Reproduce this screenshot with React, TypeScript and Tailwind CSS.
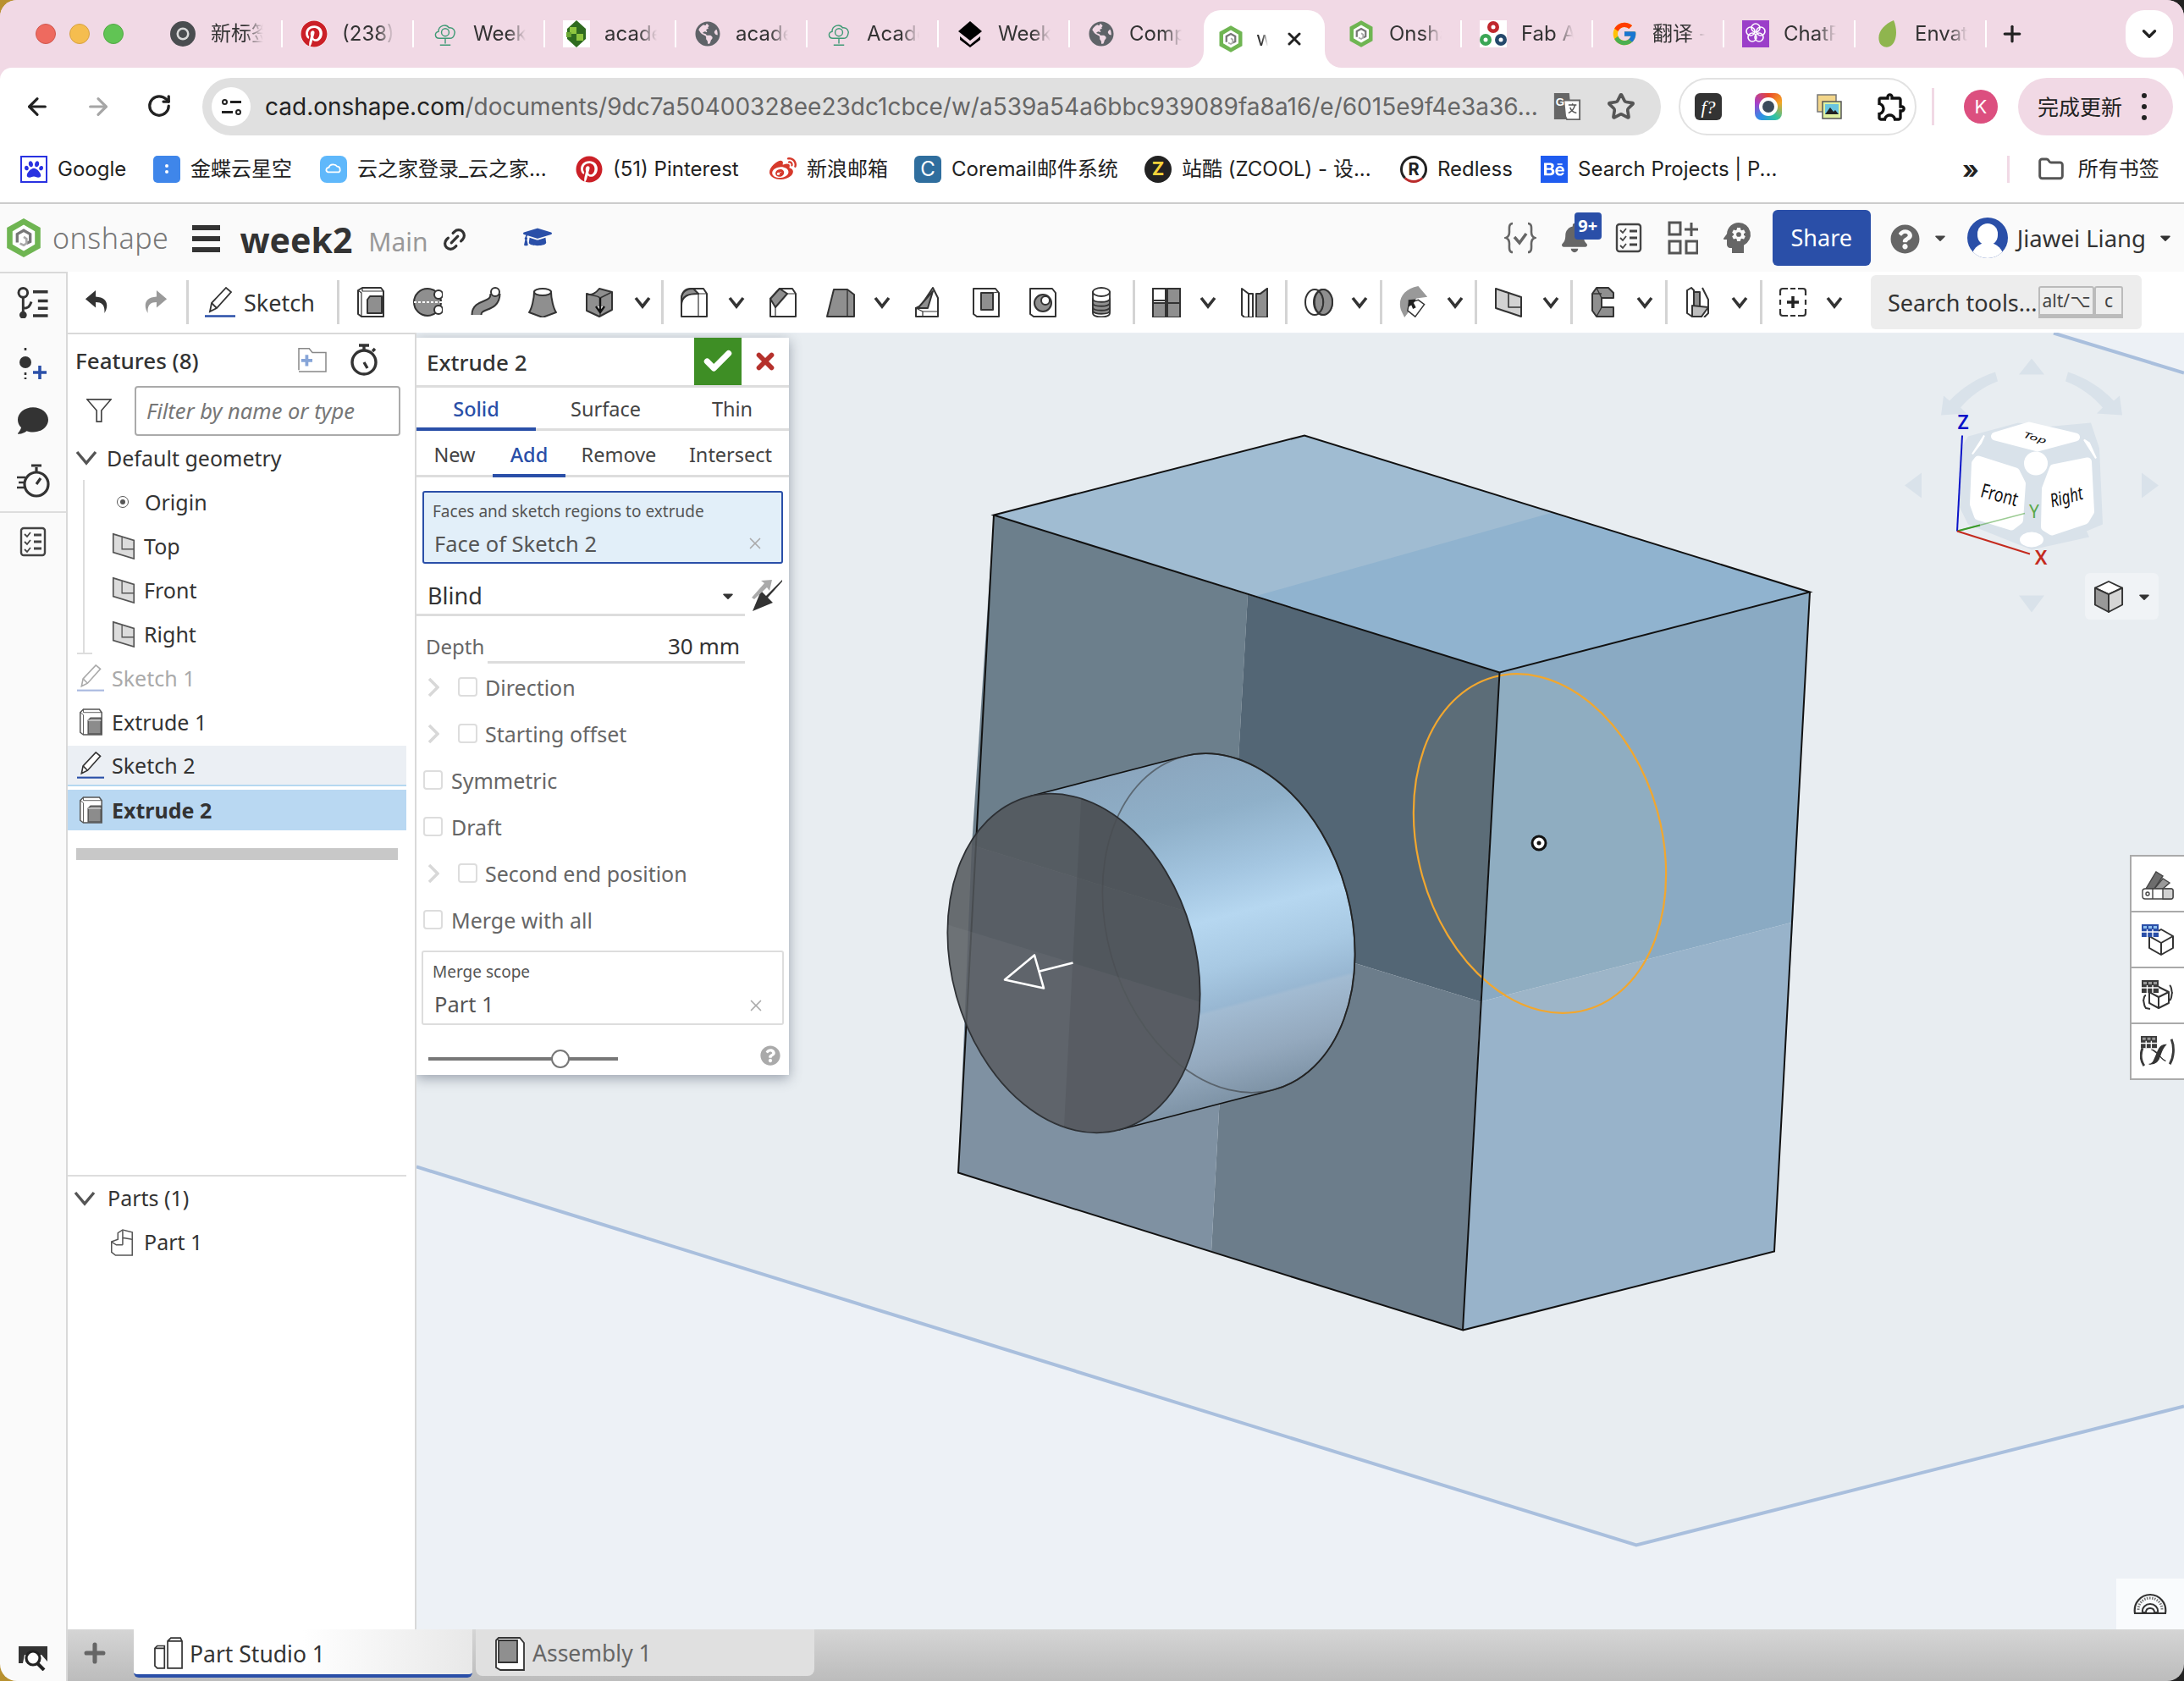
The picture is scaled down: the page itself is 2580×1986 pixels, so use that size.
import React from 'react';
import { ArrowLeft, ArrowRight, RotateCw, Star, Folder, ChevronDown, Plus, X, Link2, Check } from 'lucide-react';
import { FaPinterest, FaGlobeAmericas, FaPaw, FaWeibo, FaBehance, FaGraduationCap, FaBell, FaQuestionCircle, FaCaretDown, FaComment } from 'react-icons/fa';
import { FcGoogle } from 'react-icons/fc';
import { MdOutlineExtension, MdPsychology } from 'react-icons/md';

const BLUE = '#2a4fa8';

const Hex = ({ className = '' }: { className?: string }) => (
  <svg viewBox="0 0 40 44" className={className}>
    <path d="M20 1 38 11v22L20 43 2 33V11Z" fill="#6fb552" />
    <path d="M20 8 32 15v14l-12 7-12-7V15Z" fill="#fff" />
    <path d="M13 27V18l7-4 7 4v8l-4 2" fill="none" stroke="#777" strokeWidth="3" />
    <path d="M20 21l3 2v5l-3 2-4-2" fill="none" stroke="#aaa" strokeWidth="2.4" />
  </svg>
);

const Cloud = () => (
  <svg viewBox="0 0 32 36" className="w-[32px] h-[32px]" fill="none" stroke="#3f9a75" strokeWidth="1.6">
    <path d="M8 24C2 24 1 16 7 15 7 7 17 4 21 10c6-1 9 5 7 9-1 4-3 5-6 5Z" />
    <circle cx="16" cy="16" r="5" />
    <path d="M16 24v7M9 33h14" />
  </svg>
);

const Gem = () => (
  <svg viewBox="0 0 32 32" className="w-[32px] h-[32px]">
    <rect width="32" height="32" fill="#fff" />
    <path d="M16 0 27 10v12L16 32 5 22V10Z" fill="#2f6b1f" />
    <path d="M8 8h8v8H8ZM16 16h8v8h-8Z" fill="#8ec63f" />
    <path d="M4 14h6v6H4Z" fill="#6aa832" />
  </svg>
);

const Layers = () => (
  <svg viewBox="0 0 32 32" className="w-[32px] h-[32px]">
    <path d="M16 1 30 13 16 24 2 13Z" fill="#000" />
    <path d="M4 19 16 29 28 19 28 23 16 32 4 23Z" fill="#000" />
  </svg>
);

const ChromeLogo = () => (
  <svg viewBox="0 0 32 32" className="w-[32px] h-[32px]">
    <circle cx="16" cy="16" r="15" fill="#4a4d50" />
    <circle cx="16" cy="16" r="7.5" fill="#d9d9d9" />
    <circle cx="16" cy="16" r="5" fill="#4a4d50" />
  </svg>
);

const FabLogo = () => (
  <svg viewBox="0 0 32 32" className="w-[32px] h-[32px]">
    <rect width="32" height="32" fill="#fff" />
    <circle cx="16" cy="8" r="7" fill="#c0272d" />
    <circle cx="16" cy="8" r="2.5" fill="#fff" />
    <circle cx="7" cy="23" r="7" fill="#3aa655" />
    <circle cx="7" cy="23" r="2.5" fill="#fff" />
    <circle cx="25" cy="23" r="7" fill="#24486b" />
    <circle cx="25" cy="23" r="2.5" fill="#fff" />
  </svg>
);

const ChatLogo = () => (
  <svg viewBox="0 0 32 32" className="w-[32px] h-[32px]">
    <rect width="32" height="32" fill="#9b3fc9" />
    <g fill="none" stroke="#fff" strokeWidth="1.6">
      <circle cx="16" cy="9" r="5" />
      <circle cx="10" cy="13" r="5" />
      <circle cx="22" cy="13" r="5" />
      <circle cx="12" cy="20" r="5" />
      <circle cx="20" cy="20" r="5" />
    </g>
  </svg>
);

const EnvatoLeaf = () => (
  <svg viewBox="0 0 32 32" className="w-[32px] h-[32px]">
    <path d="M24 0C12 5 4 15 7 25c1 5 7 8 12 6C28 27 29 11 24 0Z" fill="#8fb54e" />
  </svg>
);

const PinIcon = ({ className = 'w-[32px] h-[32px]' }: { className?: string }) => (
  <span className={`${className} rounded-full bg-white flex items-center justify-center shrink-0`}>
    <FaPinterest className="w-full h-full text-[#cb2027]" />
  </span>
);

const Globe = () => <FaGlobeAmericas className="w-[30px] h-[30px] text-[#5f6368]" />;

const Tab = ({ icon, title }: { icon: React.ReactNode; title: string }) => (
  <div className="flex items-center w-[153px] h-full">
    <span className="ml-[21px] w-[32px] h-[32px] flex items-center justify-center shrink-0">{icon}</span>
    <span className="ml-[17px] w-[62px] overflow-hidden whitespace-nowrap text-[24px] text-[#333] [mask-image:linear-gradient(90deg,#000_65%,transparent)]">
      {title}
    </span>
  </div>
);

const Sep = () => <span className="w-[2px] h-[32px] bg-white shrink-0" />;

const TabStrip = () => (
  <div className="relative h-[80px] bg-[#f1d9e5] flex items-center pl-[179px]">
    <div className="absolute left-[42px] top-[28px] flex gap-[16px]">
      <span className="w-[24px] h-[24px] rounded-full bg-[#ee6a5f] border border-[#d0574d]" />
      <span className="w-[24px] h-[24px] rounded-full bg-[#f5bd4f] border border-[#d6a243]" />
      <span className="w-[24px] h-[24px] rounded-full bg-[#61c454] border border-[#52a945]" />
    </div>
    <Tab icon={<ChromeLogo />} title="新标签页" />
    <Sep />
    <Tab icon={<PinIcon />} title="(238) Pinterest" />
    <Sep />
    <Tab icon={<Cloud />} title="Week 1" />
    <Sep />
    <Tab icon={<Gem />} title="academy" />
    <Sep />
    <Tab icon={<Globe />} title="academy" />
    <Sep />
    <Tab icon={<Cloud />} title="Academy" />
    <Sep />
    <Tab icon={<Layers />} title="Week 2" />
    <Sep />
    <div className="w-[158px] h-full">
      <Tab icon={<Globe />} title="Computer" />
    </div>
    <div className="relative w-[143px] h-[68px] self-end bg-white rounded-t-[20px] flex items-center">
      <span className="absolute -left-[20px] bottom-0 w-[20px] h-[20px] bg-white" />
      <span className="absolute -left-[20px] bottom-0 w-[20px] h-[20px] bg-[#f1d9e5] rounded-br-[20px]" />
      <span className="absolute -right-[20px] bottom-0 w-[20px] h-[20px] bg-white" />
      <span className="absolute -right-[20px] bottom-0 w-[20px] h-[20px] bg-[#f1d9e5] rounded-bl-[20px]" />
      <Hex className="ml-[17px] w-[30px] h-[34px]" />
      <span className="ml-[15px] w-[14px] overflow-hidden text-[24px] text-[#333] [mask-image:linear-gradient(90deg,#000_50%,transparent)]">week2</span>
      <X className="ml-[19px] w-[24px] h-[24px] text-[#222]" strokeWidth={3} />
    </div>
    <div className="w-[160px] h-full flex items-center">
      <Hex className="ml-[28px] w-[30px] h-[34px]" />
      <span className="ml-[18px] w-[62px] overflow-hidden whitespace-nowrap text-[24px] text-[#333] [mask-image:linear-gradient(90deg,#000_65%,transparent)]">Onshape</span>
    </div>
    <Sep />
    <Tab icon={<FabLogo />} title="Fab Academy" />
    <Sep />
    <Tab icon={<FcGoogle className="w-[32px] h-[32px]" />} title="翻译 - Google" />
    <Sep />
    <Tab icon={<ChatLogo />} title="ChatPDF" />
    <Sep />
    <Tab icon={<EnvatoLeaf />} title="Envato" />
    <Sep />
    <Plus className="ml-[15px] w-[30px] h-[30px] text-[#222]" strokeWidth={2.6} />
    <span className="ml-[119px] w-[56px] h-[56px] bg-white rounded-[22px] flex items-center justify-center">
      <ChevronDown className="w-[26px] h-[26px] text-[#222]" strokeWidth={3} />
    </span>
  </div>
);

const TranslateIcon = () => (
  <svg viewBox="0 0 34 36" className="w-[34px] h-[34px]">
    <path d="M1 1h19l3 33H1Z" fill="#666" />
    <path d="M13 10h20v24H17l-2 -4Z" fill="#fff" stroke="#666" strokeWidth="2" />
    <text x="3" y="17" fontSize="14" fontWeight="700" fill="#fff" fontFamily="Liberation Sans, sans-serif">G</text>
    <path d="M19 16h10M24 14v2M27 16c-1 5-4 8-8 10M21 19c1 3 4 6 8 7" stroke="#555" strokeWidth="1.6" fill="none" />
  </svg>
);

const AddressRow = () => (
  <div className="h-[80px] bg-white rounded-t-[14px] flex items-start pt-[12px] pl-[28px]">
    <ArrowLeft className="mt-[18px] w-[32px] h-[32px] text-[#222]" strokeWidth={2.4} />
    <ArrowRight className="ml-[40px] mt-[18px] w-[32px] h-[32px] text-[#a6a6a6]" strokeWidth={2.4} />
    <RotateCw className="ml-[41px] mt-[18px] w-[30px] h-[30px] text-[#222]" strokeWidth={2.6} />
    <div className="ml-[36px] w-[1723px] h-[68px] bg-[#e0e0e0] rounded-full flex items-center">
      <span className="ml-[11px] w-[46px] h-[46px] rounded-full bg-white flex flex-col items-center justify-center gap-[5px] shrink-0">
        <span className="flex items-center gap-[3px]"><span className="w-[7px] h-[7px] rounded-full border-2 border-[#222]" /><span className="w-[13px] h-[3px] bg-[#222]" /></span>
        <span className="flex items-center gap-[3px]"><span className="w-[13px] h-[3px] bg-[#222]" /><span className="w-[7px] h-[7px] rounded-full border-2 border-[#222]" /></span>
      </span>
      <span className="ml-[17px] w-[1510px] whitespace-nowrap text-[28px] text-[#666]">
        <span className="text-[#222]">cad.onshape.com</span>/documents/9dc7a50400328ee23dc1cbce/w/a539a54a6bbc939089fa8a16/e/6015e9f4e3a36...
      </span>
      <span className="ml-[11px]"><TranslateIcon /></span>
      <Star className="ml-[30px] w-[34px] h-[34px] text-[#555]" strokeWidth={2.6} />
    </div>
    <div className="ml-[21px] w-[281px] h-[68px] rounded-full border-2 border-[#e2e2e2] flex items-center">
      <span className="ml-[17px] w-[32px] h-[32px] rounded-[6px] bg-[#333] text-white flex items-center justify-center italic text-[22px] font-['Liberation_Serif',serif]">f?</span>
      <span className="ml-[39px] w-[32px] h-[32px] rounded-[8px] bg-[conic-gradient(#e8452c,#f5a623,#2fc4a0,#2c8fe8,#a83fc9,#e8452c)] flex items-center justify-center">
        <span className="w-[22px] h-[22px] rounded-full bg-white flex items-center justify-center"><span className="w-[14px] h-[14px] rounded-full bg-[#3b4b5c]" /></span>
      </span>
      <svg viewBox="0 0 32 32" className="ml-[40px] w-[32px] h-[32px]">
        <rect x="2" y="2" width="22" height="20" fill="#f3d68a" stroke="#777" strokeWidth="1.5" />
        <rect x="8" y="10" width="22" height="20" fill="#dff0a0" stroke="#555" strokeWidth="1.5" />
        <rect x="11" y="13" width="16" height="12" fill="#69c5e0" />
        <path d="M11 25l6-8 4 5 2-2 4 5Z" fill="#222" />
      </svg>
      <MdOutlineExtension className="ml-[38px] w-[40px] h-[40px] text-[#111]" />
    </div>
    <span className="ml-[18px] mt-[12px] w-[3px] h-[44px] bg-[#f1d9e5]" />
    <span className="ml-[35px] mt-[14px] w-[40px] h-[40px] rounded-full bg-[#dc4f7f] text-white text-[22px] flex items-center justify-center">K</span>
    <div className="ml-[24px] w-[183px] h-[68px] rounded-full bg-[#f1d9e5] flex items-center pl-[23px]">
      <span className="text-[25px] text-[#222] font-['Noto_Sans_CJK_SC',sans-serif]">完成更新</span>
      <span className="ml-[23px] flex flex-col gap-[7px]">
        <span className="w-[6px] h-[6px] rounded-full bg-[#222]" />
        <span className="w-[6px] h-[6px] rounded-full bg-[#222]" />
        <span className="w-[6px] h-[6px] rounded-full bg-[#222]" />
      </span>
    </div>
  </div>
);

const SquareFav = ({ className, children }: { className: string; children: React.ReactNode }) => (
  <span className={`w-[32px] h-[32px] flex items-center justify-center shrink-0 ${className}`}>{children}</span>
);

const Bookmark = ({ icon, label, className }: { icon: React.ReactNode; label: string; className: string }) => (
  <div className={`flex items-center shrink-0 ${className}`}>
    {icon}
    <span className="ml-[12px] text-[24px] text-[#222] whitespace-nowrap">{label}</span>
  </div>
);

const BookmarkRow = () => (
  <div className="h-[81px] bg-white border-b-2 border-[#cccccc] flex items-center pl-[24px]">
    <Bookmark className="w-[157px]" label="Google" icon={<SquareFav className="border-2 border-[#2932e1] text-[#2932e1]"><FaPaw className="w-[22px] h-[22px]" /></SquareFav>} />
    <Bookmark className="w-[197px]" label="金蝶云星空" icon={<SquareFav className="rounded-[5px] bg-[#3f86ea] text-white"><span className="flex flex-col gap-[3px] items-center"><span className="w-[4px] h-[4px] rounded-full bg-white" /><span className="w-[4px] h-[4px] rounded-full bg-white" /></span></SquareFav>} />
    <Bookmark className="w-[302px]" label="云之家登录_云之家..." icon={<SquareFav className="rounded-[8px] bg-[#5fb8fb]"><svg viewBox="0 0 20 20" className="w-[22px] h-[22px]" fill="none" stroke="#fff" strokeWidth="1.6"><path d="M4 13c-3-1-2-5 1-5 1-4 7-4 9-1 3 0 4 4 2 6Z" /></svg></SquareFav>} />
    <Bookmark className="w-[229px]" label="(51) Pinterest" icon={<PinIcon />} />
    <Bookmark className="w-[171px]" label="新浪邮箱" icon={<FaWeibo className="w-[32px] h-[32px] text-[#d6392b]" />} />
    <Bookmark className="w-[272px]" label="Coremail邮件系统" icon={<SquareFav className="rounded-[6px] bg-[#2f6e9e] text-white text-[24px]">C</SquareFav>} />
    <Bookmark className="w-[302px]" label="站酷 (ZCOOL) - 设..." icon={<SquareFav className="rounded-full bg-[#222] text-[#f5d23a] font-bold text-[22px]">Z</SquareFav>} />
    <Bookmark className="w-[166px]" label="Redless" icon={<SquareFav className="rounded-full bg-white border-[3px] border-[#222] border-b-[#b92b2b] text-[#222] font-bold text-[20px]">R</SquareFav>} />
    <Bookmark className="w-[498px]" label="Search Projects | P..." icon={<SquareFav className="bg-[#1f5cf0] text-white"><FaBehance className="w-[24px] h-[24px]" /></SquareFav>} />
    <span className="text-[30px] leading-none text-[#222] font-bold">»</span>
    <span className="ml-[33px] w-[3px] h-[32px] bg-[#f1d9e5]" />
    <Folder className="ml-[33px] w-[32px] h-[32px] text-[#555]" strokeWidth={2.2} />
    <span className="ml-[16px] text-[24px] text-[#222]">所有书签</span>
  </div>
);

const Checklist = ({ className = '' }: { className?: string }) => (
  <svg viewBox="0 0 32 36" className={className} fill="none" stroke="#444" strokeWidth="2.4">
    <rect x="2" y="2" width="28" height="32" rx="3" />
    <path d="M6 9l3 3 4-5M6 18l3 3 4-5M6 27l3 3 4-5" strokeWidth="1.8" />
    <path d="M17 10h9M17 18h9M17 26h9" strokeWidth="3" />
  </svg>
);

const Header = () => (
  <div className="h-[80px] bg-[#fafafa] flex items-center shrink-0 relative">
    <Hex className="ml-[6px] w-[44px] h-[50px]" />
    <span className="ml-[12px] text-[34px] text-[#777] font-light tracking-[0.5px]">onshape</span>
    <span className="ml-[28px] w-[33px] flex flex-col gap-[7px] mt-[2px]">
      <span className="h-[6px] bg-[#333]" /><span className="h-[6px] bg-[#333]" /><span className="h-[6px] bg-[#333]" />
    </span>
    <span className="ml-[23px] mt-[4px] text-[41px] font-bold text-[#333] leading-none">week2</span>
    <span className="ml-[19px] mt-[10px] text-[30px] text-[#999] leading-none">Main</span>
    <Link2 className="ml-[15px] mt-[4px] w-[32px] h-[32px] text-[#333] -rotate-45" strokeWidth={2.4} />
    <FaGraduationCap className="ml-[65px] w-[34px] h-[30px] text-[#2a4fa8] -mt-[3px]" />
    <div className="ml-auto flex items-center relative">
      <svg viewBox="0 0 38 38" className="w-[38px] h-[38px]" fill="none" stroke="#666" strokeWidth="2.6">
        <path d="M10 2C5 2 6 8 6 12s-1 6-4 7c3 1 4 3 4 7s-1 10 4 10M28 2c5 0 4 6 4 10s1 6 4 7c-3 1-4 3-4 7s1 10-4 10" />
        <path d="M12 18l6 7 8-11" strokeWidth="3.5" />
      </svg>
      <span className="relative ml-[30px] w-[30px] h-[36px]">
        <FaBell className="w-[30px] h-[36px] text-[#666]" />
        <span className="absolute -top-[12px] left-[15px] w-[32px] h-[32px] rounded-[4px] bg-[#2a4fa8] text-white text-[20px] font-bold flex items-center justify-center">9+</span>
      </span>
      <Checklist className="ml-[33px] w-[32px] h-[36px]" />
      <svg viewBox="0 0 36 40" className="ml-[30px] w-[36px] h-[40px]" fill="none" stroke="#555" strokeWidth="3">
        <rect x="2" y="2" width="13" height="14" /><rect x="2" y="24" width="13" height="14" /><rect x="22" y="24" width="13" height="14" />
        <path d="M28 2v16M20 10h16" />
      </svg>
      <MdPsychology className="ml-[22px] w-[48px] h-[48px] text-[#666]" />
      <button className="ml-[18px] w-[116px] h-[66px] rounded-[6px] bg-[#2a4fa8] text-white text-[27px]">Share</button>
      <FaQuestionCircle className="ml-[23px] mt-[3px] w-[35px] h-[35px] text-[#666]" />
      <FaCaretDown className="ml-[14px] w-[20px] h-[20px] text-[#444]" />
      <span className="ml-[22px] w-[48px] h-[48px] rounded-full bg-[#2a4fa8] relative overflow-hidden flex justify-center">
        <span className="absolute top-[7px] w-[24px] h-[26px] rounded-full bg-white" />
        <span className="absolute top-[30px] w-[38px] h-[36px] rounded-full bg-white" />
      </span>
      <span className="ml-[11px] pt-[2px] text-[27.5px] text-[#333]">Jiawei Liang</span>
      <FaCaretDown className="ml-[13px] mr-[12px] w-[20px] h-[20px] text-[#333]" />
    </div>
  </div>
);

// toolbar icons
const I = ({ className = '', children, sw = 2 }: { className?: string; children: React.ReactNode; sw?: number }) => (
  <svg viewBox="0 0 36 36" className={`w-[36px] h-[36px] shrink-0 ${className}`} fill="none" stroke="#333" strokeWidth={sw} strokeLinejoin="round">
    {children}
  </svg>
);
const G = '#8f8f8f';
const Chev = ({ className = '' }: { className?: string }) => (
  <svg viewBox="0 0 20 20" className={`w-[20px] h-[20px] shrink-0 ${className}`} fill="none" stroke="#333" strokeWidth="3.6">
    <path d="M2 5l8 10 8-10" />
  </svg>
);
const TreeChev = ({ className = '' }: { className?: string }) => (
  <svg viewBox="0 0 26 20" className={`w-[26px] h-[20px] shrink-0 ${className}`} fill="none" stroke="#555" strokeWidth="3.4">
    <path d="M2 3l11 13L24 3" />
  </svg>
);
const VSep = ({ className = '' }: { className?: string }) => <span className={`w-[3px] h-[52px] bg-[#d4d4d4] shrink-0 ${className}`} />;

const ExtrudeIcon = ({ className = '' }: { className?: string }) => (
  <I className={className}>
    <path d="M3 4l5-3h22l3 4v30H7l-4-3Z" fill="#fff" />
    <path d="M8 1v4h25M3 4l4 3v28" strokeWidth="1.2" />
    <path d="M14 15l3-4h14v20H14Z" fill={G} />
  </I>
);
const PencilIcon = ({ className = '', dim = false }: { className?: string; dim?: boolean }) => (
  <svg viewBox="0 0 36 36" className={`shrink-0 ${className}`} fill="#fff" stroke={dim ? '#aaa' : '#333'} strokeWidth="1.8">
    <path d="M6 29 8 19 25 1l6 5L14 25Z" />
    <path d="M8 19l6 6" />
    <path d="M0 34.5h36" stroke={dim ? '#a9b9e0' : BLUE} strokeWidth="2.4" />
  </svg>
);

const Toolbar = () => (
  <div className="h-[72px] bg-white flex items-center shrink-0">
    <svg viewBox="0 0 30 32" className="ml-[20px] w-[28px] h-[32px] shrink-0" fill="#333"><path d="M14 1 1 12l13 11v-7c8 0 12 4 11 14 6-10 4-20-11-21Z" /></svg>
    <svg viewBox="0 0 30 32" className="ml-[42px] w-[28px] h-[32px] shrink-0" fill="#9a9a9a"><path d="M16 1 29 12 16 23v-7C8 16 4 20 5 30-1 20 1 10 16 9Z" /></svg>
    <VSep className="ml-[22px]" />
    <PencilIcon className="ml-[19px] w-[36px] h-[36px]" />
    <span className="ml-[10px] pt-[2px] w-[84px] text-[27px] text-[#333] whitespace-nowrap">Sketch</span>
    <VSep className="ml-[26px]" />
    <ExtrudeIcon className="ml-[19px]" />
    <I className="ml-[31px]">
      <circle cx="18" cy="18" r="16" fill={G} />
      <circle cx="31" cy="9" r="5" fill="#fff" /><circle cx="31" cy="27" r="5" fill="#fff" />
      <path d="M2 18h34" strokeDasharray="3 2" stroke="#fff" />
    </I>
    <I className="ml-[33px]">
      <path d="M7 33C7 18 29 26 29 8" stroke="#333" strokeWidth="13" />
      <path d="M7 33C7 18 29 26 29 8" stroke={G} strokeWidth="9" />
      <circle cx="29" cy="6" r="5" fill="#fff" />
    </I>
    <I className="ml-[31px]">
      <path d="M8 6C8 2 28 2 28 6c0 8 3 20 6 24l-16 6-16-6c3-4 6-16 6-24Z" fill={G} />
      <ellipse cx="18" cy="6" rx="10" ry="4" fill="#fff" />
    </I>
    <I className="ml-[31px]">
      <path d="M3 8c6 3 12-2 15-6l15 4v21l-15 8-15-7Z" fill={G} />
      <path d="M3 8c5 3 11 1 16 5l14-7M19 13v22" strokeWidth="1.4" />
      <path d="M19 13v16M14 23l5 7 5-7" stroke="#111" fill="#fff" strokeWidth="2.4" />
    </I>
    <Chev className="ml-[23px]" />
    <VSep className="ml-[12px]" />
    <I className="ml-[18px]">
      <path d="M3 35V14C3 6 8 2 14 2h15l4 6v27Z" fill="#fff" />
      <path d="M3 22C3 10 12 8 23 8l-6-6C8 2 3 7 3 14Z" fill={G} />
      <path d="M23 8h10M23 8v27" strokeWidth="1.2" />
    </I>
    <Chev className="ml-[22px]" />
    <I className="ml-[27px]">
      <path d="M3 35V14L14 2h15l4 6v27Z" fill="#fff" />
      <path d="M3 14 14 2l9 6L9 24Z" fill={G} />
      <path d="M9 24v11M23 8h10" strokeWidth="1.2" />
    </I>
    <I className="ml-[32px]">
      <path d="M10 3h16l8 6v26H2Z" fill={G} />
      <path d="M26 3v32" strokeWidth="1.4" />
    </I>
    <Chev className="ml-[21px]" />
    <I className="ml-[26px]">
      <path d="M4 35V25h4L24 1l6 12v22Z" fill="#fff" />
      <path d="M4 25h14L24 5 8 23Z" fill={G} />
      <path d="M4 25l8 4h18M12 29v6" strokeWidth="1.2" />
    </I>
    <I className="ml-[33px]">
      <path d="M3 2h26l4 5v28H7l-4-3Z" fill="#fff" />
      <path d="M12 7h14v20H12Z" fill={G} />
      <path d="M26 7l6-1" strokeWidth="1.2" />
    </I>
    <I className="ml-[31px]">
      <path d="M3 2h26l4 5v28H7l-4-3Z" fill="#fff" />
      <circle cx="18" cy="19" r="10" fill={G} />
      <circle cx="21" cy="16" r="5" fill="#fff" />
    </I>
    <I className="ml-[33px]" sw={1.8}>
      <path d="M8 6v25c0 6 20 6 20 0V6Z" fill="#fff" />
      <path d="M8 14c0 5 20 5 20 0v14c0 5-20 5-20 0Z" fill={G} />
      <path d="M8 19c0 5 20 5 20 0M8 24c0 5 20 5 20 0" />
      <ellipse cx="18" cy="6" rx="10" ry="5" fill="#fff" />
    </I>
    <VSep className="ml-[19px]" />
    <I className="ml-[19px]">
      <path d="M2 2h15v17H2ZM19 2h15v17H19Z" fill="#fff" />
      <path d="M2 8h15M19 8h15" />
      <path d="M2 19h15v17H2ZM19 2h15v34H19Z" fill={G} />
      <path d="M19 19h15" />
      <path d="M2 2h15v14H2Z" fill="#fff" />
    </I>
    <Chev className="ml-[21px]" />
    <I className="ml-[27px]">
      <path d="M3 2l8 6v28H6L3 33Z" fill="#fff" />
      <path d="M11 8h5v28h-5ZM33 2l-8 6v28h8Z" fill="#fff" />
      <path d="M25 8h-5v28h13V2Z" fill={G} />
    </I>
    <VSep className="ml-[18px]" />
    <I className="ml-[19px]">
      <ellipse cx="13" cy="18" rx="11" ry="15" fill="#fff" />
      <ellipse cx="23" cy="18" rx="11" ry="15" fill="#fff" />
      <path d="M18 5c7 6 7 20 0 26-7-6-7-20 0-26Z" fill={G} />
      <path d="M23 3c6 0 11 7 11 15s-5 15-11 15c-2 0-4-1-5-2 7-6 7-20 0-26 1-1 3-2 5-2Z" fill={G} />
    </I>
    <Chev className="ml-[20px]" />
    <VSep className="ml-[14px]" />
    <svg viewBox="0 0 40 42" className="ml-[19px] w-[36px] h-[42px] shrink-0">
      <path d="M4 33C-2 18 6 4 26 0l12 14-14 2-6 4-4 13-6 8Z" fill="#999" />
      <path d="M14 22l12-4 8 6-12 16-10-8Z" fill="#fff" stroke="#333" strokeWidth="1.6" />
      <path d="M13 18l10-1-3 5 3 6-4 2-2-5-4 2Z" fill="#222" />
    </svg>
    <Chev className="ml-[21px]" />
    <VSep className="ml-[13px]" />
    <I className="ml-[19px]">
      <path d="M3 2l30 10v23L3 25Z" fill="#d2d2d2" />
      <path d="M18 7v17h15" strokeWidth="1.6" />
    </I>
    <Chev className="ml-[22px]" />
    <VSep className="ml-[13px]" />
    <I className="ml-[17px]">
      <path d="M6 8l5-7h14l6 6v6H17v11h14v11H11l-5-7Z" fill={G} />
      <path d="M11 1l6 12M6 8h11M11 35l6-11" strokeWidth="1.4" />
    </I>
    <Chev className="ml-[22px]" />
    <VSep className="ml-[14px]" />
    <I className="ml-[17px]">
      <path d="M6 4l5-3 3 3v20l12 2 1 1-4 8H12l-6-4Z" fill="#fff" />
      <path d="M24 1l7 14v16l-5 5" fill="#fff" />
      <path d="M14 6h7v18h-7Z" fill={G} />
      <path d="M12 22l19 2-8 11H12Z" fill="#bdbdbd" />
    </I>
    <Chev className="ml-[22px]" />
    <VSep className="ml-[14px]" />
    <I className="ml-[18px]" sw={2.2}>
      <path d="M12 2h-6a3 3 0 0 0-3 3v5M24 2h6a3 3 0 0 1 3 3v5M12 34h-6a3 3 0 0 1-3-3v-5M24 34h6a3 3 0 0 0 3-3v-5M3 15v6M33 15v6M15 2h6M15 34h6" />
      <path d="M18 11v14M11 18h14" strokeWidth="3.5" stroke="#222" />
    </I>
    <Chev className="ml-[21px]" />
    <div className="ml-[33px] w-[320px] h-[64px] rounded-[6px] bg-[#ededed] flex items-center pl-[20px]">
      <span className="pt-[2px] text-[27px] text-[#333] whitespace-nowrap w-[178px]">Search tools...</span>
      <span className="h-[38px] w-[66px] rounded-t-[3px] border-2 border-[#bbb] border-b-[5px] text-[21px] text-[#444] flex items-center justify-center font-['Noto_Sans','DejaVu_Sans',sans-serif]">alt/⌥</span>
      <span className="h-[38px] w-[34px] rounded-t-[3px] border-2 border-[#bbb] border-b-[5px] text-[21px] text-[#444] flex items-center justify-center">c</span>
    </div>
  </div>
);

const PlaneIcon = () => (
  <svg viewBox="0 0 30 34" className="w-[30px] h-[32px] shrink-0" fill="#dcdcdc" stroke="#555" strokeWidth="1.8">
    <path d="M2 2l26 8v23L2 25Z" />
    <path d="M13 6v15h15" fill="none" strokeWidth="1.4" />
  </svg>
);

const FeatureIcon = () => (
  <svg viewBox="0 0 30 34" className="w-[30px] h-[32px] shrink-0" fill="none" stroke="#555" strokeWidth="1.6">
    <path d="M2 5l4-4h20l3 4v28H6l-4-3Z" fill="#fff" />
    <path d="M6 1v4h23M2 5l4 3v25" strokeWidth="1" />
    <path d="M12 15l3-3h13v20H12Z" fill="#8c8c8c" />
    <path d="M12 15h16" stroke="#ccc" />
  </svg>
);

const Row = ({ icon, label, className = '', textClass = 'text-[#333]' }: { icon?: React.ReactNode; label: string; className?: string; textClass?: string }) => (
  <div className={`h-[52px] flex items-center shrink-0 ${className}`}>
    {icon}
    <span className={`pt-[2px] text-[25px] whitespace-nowrap ${textClass}`}>{label}</span>
  </div>
);

const FeaturePanel = () => (
  <aside className="w-[412px] bg-white border-r-2 border-t-2 border-[#d9d9d9] flex flex-col shrink-0">
    <div className="h-[60px] flex items-center shrink-0 pl-[9px]">
      <span className="pt-[2px] text-[26px] font-medium text-[#333]">Features (8)</span>
      <svg viewBox="0 0 38 34" className="ml-[116px] w-[36px] h-[32px]" fill="none" stroke="#888" strokeWidth="1.6">
        <path d="M2 30V3h13l4 5h17v24H2" />
        <path d="M12 11v14M5 18h14" stroke="#87a5d8" strokeWidth="4" />
      </svg>
      <svg viewBox="0 0 34 38" className="ml-[26px] w-[34px] h-[38px]" fill="none" stroke="#333" strokeWidth="3.4">
        <circle cx="17" cy="22" r="14" />
        <path d="M17 8V3M11 2h12M27 9l3-3M17 22l4 7" />
      </svg>
    </div>
    <div className="h-[60px] flex items-center shrink-0 pl-[22px]">
      <svg viewBox="0 0 32 30" className="w-[30px] h-[28px]" fill="none" stroke="#444" strokeWidth="1.8"><path d="M1 1h30L19 15v14h-6V15Z" /></svg>
      <div className="ml-[27px] w-[314px] h-[59px] rounded-[4px] border-2 border-[#aaa] flex items-center pl-[12px] text-[25.5px] italic text-[#777]">Filter by name or type</div>
    </div>
    <div className="h-[52px] flex items-center shrink-0 pl-[9px]">
      <TreeChev />
      <span className="ml-[11px] pt-[2px] text-[25px] text-[#333]">Default geometry</span>
    </div>
    <div className="relative">
      <span className="absolute left-[18px] top-0 h-[205px] w-[2px] bg-[#ddd]" />
      <span className="absolute left-[11px] top-[204px] w-[18px] h-[2px] bg-[#ddd]" />
      <Row className="pl-[58px]" label="Origin" icon={<span className="mr-[19px] w-[14px] h-[14px] rounded-full border-[1.5px] border-[#555] flex items-center justify-center"><span className="w-[6px] h-[6px] rounded-full bg-[#555]" /></span>} />
      <Row className="pl-[51px]" label="Top" icon={<span className="mr-[9px]"><PlaneIcon /></span>} />
      <Row className="pl-[51px]" label="Front" icon={<span className="mr-[9px]"><PlaneIcon /></span>} />
      <Row className="pl-[51px]" label="Right" icon={<span className="mr-[9px]"><PlaneIcon /></span>} />
    </div>
    <Row className="pl-[11px]" label="Sketch 1" textClass="text-[#aaa]" icon={<PencilIcon dim className="w-[32px] h-[32px] mr-[9px]" />} />
    <Row className="pl-[12px]" label="Extrude 1" icon={<span className="mr-[10px]"><FeatureIcon /></span>} />
    <div className="h-[52px] pt-[2px] shrink-0">
      <Row className="!h-[48px] w-[400px] pl-[11px] bg-[#ebeff4] border-b-2 border-[#b5d8f0]" label="Sketch 2" icon={<PencilIcon className="w-[32px] h-[32px] mr-[9px]" />} />
    </div>
    <div className="h-[52px] pt-[2px] shrink-0">
      <Row className="!h-[48px] w-[400px] pl-[12px] bg-[#b9d8f2]" label="Extrude 2" textClass="text-[#333] font-bold" icon={<span className="mr-[10px]"><FeatureIcon /></span>} />
    </div>
    <div className="ml-[10px] mt-[19px] w-[380px] h-[14px] bg-[#c8c8c8] shrink-0" />
    <div className="mt-auto h-[537px] shrink-0">
      <div className="w-[400px] h-[2px] bg-[#dddddd]" />
      <div className="h-[52px] flex items-center pl-[7px]">
        <TreeChev />
        <span className="ml-[14px] text-[25px] text-[#333]">Parts (1)</span>
      </div>
      <div className="h-[52px] flex items-center pl-[49px]">
        <svg viewBox="0 0 30 34" className="w-[30px] h-[32px]" fill="#fff" stroke="#555" strokeWidth="1.6">
          <path d="M2 16l8-3V5l6-4 12 3v29H7l-5-4Z" /><path d="M16 1v10l12 2M2 16l6 4h8M16 20v-9" />
        </svg>
        <span className="ml-[11px] text-[25px] text-[#333]">Part 1</span>
      </div>
    </div>
  </aside>
);

const CheckBox = () => <span className="block w-[23px] h-[23px] rounded-[4px] border-2 border-[#ddd] shrink-0" />;

const Option = ({ label, nested = false }: { label: string; nested?: boolean }) => (
  <div className="h-[55px] flex items-center shrink-0 text-[25px] text-[#666] whitespace-nowrap">
    {nested ? (
      <>
        <svg viewBox="0 0 14 24" className="ml-[13px] w-[14px] h-[24px] shrink-0" fill="none" stroke="#d8d8d8" strokeWidth="3.6"><path d="M2 2l10 10L2 22" /></svg>
        <span className="ml-[22px]"><CheckBox /></span>
        <span className="ml-[9px] pt-[2px]">{label}</span>
      </>
    ) : (
      <>
        <span className="ml-[8px]"><CheckBox /></span>
        <span className="ml-[10px] pt-[2px]">{label}</span>
      </>
    )}
  </div>
);

const Dialog = () => (
  <div className="absolute left-0 top-[6px] w-[440px] h-[871px] bg-white shadow-[0_4px_14px_rgba(60,70,90,0.45)] flex flex-col">
    <div className="h-[56px] flex items-center shrink-0 pl-[12px]">
      <span className="text-[26px] font-medium text-[#333] pt-[2px]">Extrude 2</span>
      <span className="ml-auto w-[56px] h-[56px] bg-[#3e8e25] flex items-center justify-center">
        <Check className="w-[38px] h-[38px] text-white" strokeWidth={4.5} />
      </span>
      <X className="ml-[13px] mr-[13px] w-[30px] h-[30px] text-[#b5312c]" strokeWidth={4.5} />
    </div>
    <div className="h-[54px] pt-[3px] border-t-[3px] border-b-[3px] border-[#ddd] flex text-[23.5px] text-[#444] shrink-0">
      <span className="relative w-[141px] flex items-center justify-center font-medium text-[#2a4fa8]">
        Solid
        <span className="absolute left-0 right-0 -bottom-[3px] h-[4px] bg-[#2a4fa8]" />
      </span>
      <span className="w-[165px] flex items-center justify-center">Surface</span>
      <span className="w-[134px] flex items-center justify-center">Thin</span>
    </div>
    <div className="h-[55px] pt-[6px] border-b-[3px] border-[#ddd] flex text-[23.5px] text-[#444] shrink-0">
      <span className="w-[90px] flex items-center justify-center">New</span>
      <span className="relative w-[86px] flex items-center justify-center font-medium text-[#2a4fa8]">
        Add
        <span className="absolute left-0 right-0 -bottom-[3px] h-[4px] bg-[#2a4fa8]" />
      </span>
      <span className="w-[126px] flex items-center justify-center">Remove</span>
      <span className="w-[138px] flex items-center justify-center">Intersect</span>
    </div>
    <div className="mx-[7px] mt-[16px] h-[86px] rounded-[3px] border-2 border-[#2a4fa8] bg-[#e2eff9] shrink-0 pl-[10px] relative">
      <div className="mt-[8px] text-[19px] text-[#555] leading-[28px]">Faces and sketch regions to extrude</div>
      <div className="mt-[7px] ml-[2px] text-[25.5px] text-[#555] leading-[34px]">Face of Sketch 2</div>
      <X className="absolute right-[20px] top-[49px] w-[22px] h-[22px] text-[#aaa]" strokeWidth={1.8} />
    </div>
    <div className="flex shrink-0 mt-[14px]">
      <div className="w-[388px] h-[48px] pt-[3px] border-b-[3px] border-[#ddd] flex items-center pl-[13px]">
        <span className="text-[27px] text-[#333]">Blind</span>
        <FaCaretDown className="ml-auto mr-[10px] w-[20px] h-[20px] text-[#333]" />
      </div>
      <svg viewBox="0 0 38 38" className="ml-[7px] mt-[4px] w-[38px] h-[38px]">
        <path d="M37 1 18 20l-6-6-10 24 24-10-6-6L37 3Z" fill="#333" />
        <path d="M1 22 16 5l-4-3 13-1-3 13-3-4L4 24Z" fill="#aaa" />
      </svg>
    </div>
    <div className="flex shrink-0 h-[56px] items-end">
      <span className="ml-[11px] w-[73px] mb-[2px] text-[24px] text-[#666]">Depth</span>
      <div className="w-[304px] h-[48px] pt-[9px] border-b-[3px] border-[#ddd] flex items-center justify-end pr-[6px] text-[26px] text-[#333]">30 mm</div>
    </div>
    <Option nested label="Direction" />
    <Option nested label="Starting offset" />
    <Option label="Symmetric" />
    <Option label="Draft" />
    <Option nested label="Second end position" />
    <Option label="Merge with all" />
    <div className="mx-[6px] mt-[9px] h-[88px] rounded-[3px] border-2 border-[#ddd] shrink-0 pl-[11px] relative">
      <div className="mt-[9px] text-[19px] text-[#555] leading-[28px]">Merge scope</div>
      <div className="mt-[7px] ml-[2px] text-[25.5px] text-[#555] leading-[34px]">Part 1</div>
      <X className="absolute right-[20px] top-[52px] w-[22px] h-[22px] text-[#aaa]" strokeWidth={1.8} />
    </div>
    <div className="flex items-center mt-[38px] pl-[14px] relative">
      <div className="relative w-[224px] h-[4px] bg-[#777]">
        <span className="absolute left-[145px] -top-[9px] w-[22px] h-[22px] rounded-full bg-white border-2 border-[#777]" />
      </div>
      <FaQuestionCircle className="absolute right-[10px] -top-[14px] w-[24px] h-[24px] text-[#aaa]" />
    </div>
  </div>
);

const Ell = (cx: number, cy: number) => ({ cx, cy, rx: 204, ry: 144, transform: `rotate(74.4 ${cx} ${cy})` });

const Model = () => (
  <g>
    <defs>
      <linearGradient id="cyl" gradientUnits="userSpaceOnUse" x1="1307" y1="918" x2="1413" y2="1312">
        <stop offset="0" stopColor="#8ba6be" />
        <stop offset="0.18" stopColor="#8fb0c9" />
        <stop offset="0.36" stopColor="#a4c6e1" />
        <stop offset="0.48" stopColor="#b6d7f0" />
        <stop offset="0.62" stopColor="#a8c9e3" />
        <stop offset="0.73" stopColor="#98b7d2" />
        <stop offset="0.74" stopColor="#a2bbd2" />
        <stop offset="0.88" stopColor="#94a9be" />
        <stop offset="1" stopColor="#7e93a6" />
      </linearGradient>
      <clipPath id="cap"><ellipse {...Ell(1268.5, 1138.5)} /></clipPath>
    </defs>
    <polygon points="1174,609 1541,515 2138,700 1771.5,795" fill="#a0bcd2" />
    <polygon points="1482,705 1834,606 2138,700 1771.5,795" fill="#90b3cf" />
    <polygon points="1174,609 1474,703 1452,1093 1148,999" fill="#6c7f8c" />
    <polygon points="1474,703 1771.5,795 1749,1184 1452,1093" fill="#536675" />
    <polygon points="1452,1093 1749,1184 1728,1572 1431,1479" fill="#6c7d8b" />
    <polygon points="1148,999 1452,1093 1431,1479 1132,1386" fill="#7f91a2" />
    <polygon points="1771.5,795 2138,700 2118,1090 1749,1184" fill="#8aaac3" />
    <polygon points="1749,1184 2118,1090 2096,1479 1728,1572" fill="#98b3ca" />
    <ellipse {...Ell(1819, 997)} fill="#e8d8a8" fillOpacity="0.06" stroke="#f2a72e" strokeWidth="2.2" />
    <circle cx="1818" cy="996.5" r="8" fill="#fff" stroke="#111" strokeWidth="3" />
    <circle cx="1818" cy="996.5" r="2.5" fill="#111" />
    <g fill="none" stroke="#111" strokeWidth="2">
      <path d="M1174 609 1541 515 2138 700 1771.5 795Z" />
      <path d="M1174 609 1132 1386 1728 1572 1771.5 795M1728 1572 2096 1479 2138 700" />
    </g>
    <path d="M1215.5 941.5 1398.5 894A204 144 74.4 0 1 1504.5 1288L1321.5 1335.5A204 144 74.4 0 0 1215.5 941.5Z" fill="url(#cyl)" />
    <path d="M1215.5 941.5 1398.5 894A204 144 74.4 0 1 1504.5 1288L1321.5 1335.5" fill="none" stroke="#111" strokeWidth="1.8" />
    <ellipse {...Ell(1451.5, 1091)} fill="none" stroke="#333" strokeOpacity="0.55" strokeWidth="1.8" />
    <ellipse {...Ell(1268.5, 1138.5)} fill="#52565b" fillOpacity="0.86" stroke="#2c2f33" strokeWidth="1.8" />
    <g clipPath="url(#cap)">
      <polygon points="1100,1087 1440,1191 1440,1360 1100,1360" fill="#fff" fillOpacity="0.045" />
      <polygon points="1278,930 1450,930 1450,1350 1256,1350" fill="#000" fillOpacity="0.07" />
    </g>
    <g fill="none" stroke="#fff" strokeWidth="2.6" strokeLinejoin="round">
      <path d="M1187 1158 1222 1129 1233 1168Z" />
      <path d="M1228 1148 1267.5 1138" />
    </g>
  </g>
);

const ViewCube = () => (
  <g>
    <g fill="#d9e2ea">
      <path d="M2400 424 2415 443H2385Z" />
      <path d="M2400 724 2415 704H2385Z" />
      <path d="M2250 574 2270 559V589Z" />
      <path d="M2550 574 2530 559V589Z" />
      <path d="M2293 491 2296 468 2303 474C2318 458 2336 447 2357 440L2360 451C2342 458 2328 468 2316 482L2323 489Z" />
      <path d="M2507 491 2504 468 2497 474C2482 458 2464 447 2443 440L2440 451C2458 458 2472 468 2484 482L2477 489Z" />
      <path d="M2325 516 2384 500 2415 505 2470 500 2480 530 2484 620 2465 628 2468 635 2400 650 2325 620 2315 600 2317 530Z" />
    </g>
    <g fill="#fff" stroke="#fff" strokeWidth="10" strokeLinejoin="round">
      <path d="M2357 516 2397 504 2452 517 2407 529Z" />
      <path d="M2337 544 2381 558 2388 572 2385 615 2376 622 2337 610 2332 596 2334 548Z" />
      <path d="M2466 546 2426 554 2417 578 2416 623 2424 628 2463 615 2469 605Z" />
    </g>
    <circle cx="2405" cy="548" r="14" fill="#fff" />
    <ellipse cx="2400" cy="638" rx="14" ry="9" fill="#fff" />
    <path d="M2344 515 2330 537 2340 524Z" fill="#fff" stroke="#fff" strokeWidth="2" />
    <path d="M2462 520 2476 542 2468 524Z" fill="#fff" stroke="#fff" strokeWidth="2" />
    <g fontFamily="Noto Sans, sans-serif" fill="#111" textAnchor="middle">
      <text x="0" y="0" fontSize="15" fontStyle="italic" transform="translate(2403 521) rotate(16) scale(1.2 0.65)">Top</text>
      <text x="0" y="0" fontSize="21" transform="translate(2360 593) rotate(15) scale(0.85 1.1)">Front</text>
      <text x="0" y="0" fontSize="20" fontStyle="italic" transform="translate(2443 595) rotate(-15) scale(0.85 1.1)">Right</text>
    </g>
    <path d="M2312 628 2392 607" stroke="#3a9a2a" strokeWidth="1.5" strokeOpacity="0.5" />
    <path d="M2312 628 2339 621" stroke="#3a9a2a" strokeWidth="2" />
    <path d="M2312 628 2318 515" stroke="#0b14c8" strokeWidth="2" />
    <path d="M2312 628 2398 655" stroke="#c42a1e" strokeWidth="2" />
    <g fontFamily="Noto Sans, sans-serif" fontWeight="600" fontSize="23" textAnchor="middle">
      <text x="2319" y="507" fill="#0b14c8">Z</text>
      <text x="2411" y="667" fill="#c42a1e">X</text>
      <text x="2403" y="612" fill="#5aa84a" fontWeight="400" fontSize="21">Y</text>
    </g>
  </g>
);

const Viewport = () => (
  <main className="relative flex-1 overflow-hidden bg-[#edf1f6]">
    <svg viewBox="492 394 2088 1531" className="absolute inset-0 w-full h-full">
      <polygon points="492,394 2426,394 2580,441 2580,1662 1933,1826 492,1379" fill="#e8edf1" />
      <path d="M2426 394 2580 441M492 1379 1933 1826 2580 1662" fill="none" stroke="#a9bfdd" strokeWidth="4" />
      <Model />
      <ViewCube />
    </svg>
    <Dialog />
    <div className="absolute left-[1971px] top-[284px] w-[87px] h-[55px] rounded-[6px] bg-[#f0f3f6] flex items-center pl-[10px]">
      <svg viewBox="0 0 38 40" className="w-[36px] h-[38px]" stroke="#333" strokeWidth="2" strokeLinejoin="round">
        <path d="M19 1 36 9 19 17 2 9Z" fill="#fff" />
        <path d="M2 9 19 17V39L2 30Z" fill="#999" />
        <path d="M36 9 19 17V39L36 30Z" fill="#d5d5d5" />
      </svg>
      <FaCaretDown className="ml-[14px] w-[20px] h-[20px] text-[#333]" />
    </div>
    <div className="absolute right-0 top-[617px] w-[64px] h-[266px] border-2 border-r-0 border-[#aaa] bg-white flex flex-col">
      <div className="h-[66px] flex items-center justify-center border-b-2 border-[#aaa]">
        <svg viewBox="0 0 40 40" className="w-[40px] h-[40px]" stroke="#444" strokeWidth="1.4">
          <path d="M6 26 18 6l8 5-10 15Z" fill="#6d6d6d" />
          <path d="M16 26 26 14l8 5-8 7Z" fill="#999" />
          <rect x="2" y="26" width="36" height="12" rx="3" fill="#fff" />
          <path d="M26 26h10a2 2 0 0 1 2 2v8a2 2 0 0 1-2 2H26Z" fill="#d2d2d2" />
          <path d="M14 26v12" />
          <circle cx="8" cy="32" r="2" fill="#fff" />
        </svg>
      </div>
      <div className="h-[66px] flex items-center justify-center border-b-2 border-[#aaa]">
        <svg viewBox="0 0 40 40" className="w-[40px] h-[40px]">
          <g fill="none" stroke="#333" strokeWidth="2" strokeLinejoin="round">
            <path d="M10 16 24 8 38 16V30L24 38 10 30Z" />
            <path d="M10 16 24 24 38 16M24 24V38" />
          </g>
          <rect x="1" y="2" width="20" height="15" fill="#2a4fa8" />
          <path d="M3 4h4v3H3ZM9 4h4v3H9ZM15 4h4v3h-4Z" fill="#8fc1ef" />
          <path d="M1 11h20M7.5 8v9M14 8v9" stroke="#fff" strokeWidth="1.4" />
        </svg>
      </div>
      <div className="h-[66px] flex items-center justify-center border-b-2 border-[#aaa]">
        <svg viewBox="0 0 40 40" className="w-[40px] h-[40px]">
          <g fill="none" stroke="#333" strokeWidth="2" strokeLinejoin="round">
            <path d="M10 16 21 10 33 16V29L21 35 10 29Z" />
            <path d="M10 16 21 22 33 16M21 22V35" />
            <path d="M6 20c-3 0-2 5-3 6 1 1 0 6 3 9l5 1M34 8c3 2 2 8 3 9-1 1 0 7-3 9" />
          </g>
          <rect x="1" y="2" width="20" height="15" fill="#3a3a3a" />
          <path d="M3 4h4v3H3ZM9 4h4v3H9ZM15 4h4v3h-4Z" fill="#999" />
          <path d="M1 11h20M7.5 8v9M14 8v9" stroke="#fff" strokeWidth="1.4" />
        </svg>
      </div>
      <div className="h-[64px] flex items-center justify-center">
        <svg viewBox="0 0 44 40" className="w-[42px] h-[38px]">
          <rect x="1" y="1" width="20" height="15" fill="#3a3a3a" />
          <path d="M3 3h4v3H3ZM9 3h4v3H9ZM15 3h4v3h-4Z" fill="#999" />
          <path d="M1 10h20M7.5 7v9M14 7v9" stroke="#fff" strokeWidth="1.4" />
          <path d="M3 16c-3 8-2 16 2 22M39 5c4 10 3 22-2 31" fill="none" stroke="#3a3a3a" strokeWidth="3" />
          <path d="M11 36c5 0 6-4 9-11 3-8 5-13 12-13-3 3-5 7-7 13-2 7-5 11-14 11Z M14 18c8 0 12 14 18 14" fill="#333" stroke="#333" strokeWidth="1.2" />
        </svg>
      </div>
    </div>
    <div className="absolute right-0 bottom-0 w-[80px] h-[60px] bg-[#f9fbfd] flex items-center justify-center">
      <svg viewBox="0 0 40 26" className="w-[40px] h-[26px]" fill="none" stroke="#333">
        <path d="M2 24C0 12 9 2 20 2s20 10 18 22Z" strokeWidth="2.2" />
        <path d="M6 20C6 12 12 6 20 6s14 6 14 14" strokeWidth="3" strokeDasharray="1.5 1.5" stroke="#777" />
        <path d="M11 23c-1-6 4-10 9-10s10 4 9 10h-4c0-3-2-5-5-5s-5 2-5 5Z" strokeWidth="2" />
      </svg>
    </div>
  </main>
);

const Rail = () => (
  <nav className="w-[80px] bg-[#fafafa] border-r-2 border-t-2 border-[#d9d9d9] flex flex-col items-center shrink-0 relative">
    <svg viewBox="0 0 40 38" className="mt-[16px] w-[40px] h-[37px]" fill="none" stroke="#333" strokeWidth="3">
      <circle cx="8" cy="7" r="5.5" />
      <path d="M8 13v20M8 26c6 0 8-2 10-8" />
      <circle cx="8" cy="34" r="3" fill="#333" />
      <path d="M20 6h18M26 17h12M26 26h12M20 35h18" strokeWidth="3.6" />
    </svg>
    <svg viewBox="0 0 34 40" className="mt-[34px] w-[34px] h-[40px]">
      <path d="M8 1v5M8 30v8" stroke="#333" strokeWidth="2.6" strokeDasharray="3 3" />
      <circle cx="8" cy="18" r="7" fill="#333" />
      <path d="M25 22v16M17 30h16" stroke={BLUE} strokeWidth="3.6" />
    </svg>
    <FaComment className="mt-[29px] w-[40px] h-[36px] text-[#333]" />
    <svg viewBox="0 0 40 42" className="mt-[32px] w-[40px] h-[42px]" fill="none" stroke="#333" strokeWidth="3.2">
      <circle cx="24" cy="25" r="14" />
      <path d="M24 11V5M18 3h12M24 25l5-7" />
      <path d="M1 17h10M3 23h7M1 29h9" strokeWidth="2.4" />
    </svg>
    <div className="mt-[15px] w-full h-[2px] bg-[#dddddd]" />
    <Checklist className="mt-[16px] w-[32px] h-[36px]" />
    <svg viewBox="0 0 36 30" className="mt-auto mb-[12px] w-[36px] h-[30px]">
      <path d="M1 1h34v18l-7-8H8l-2 10H1Z" fill="#333" />
      <circle cx="18" cy="15" r="8" fill="#fff" stroke="#222" strokeWidth="3.2" />
      <path d="M23 21l8 8" stroke="#222" strokeWidth="4" />
    </svg>
  </nav>
);

const BottomBar = () => (
  <div className="h-[61px] shrink-0 bg-gradient-to-b from-[#d5d5d5] to-[#bcbcbc] flex items-start">
    <Plus className="ml-[15px] mt-[11px] w-[34px] h-[34px] text-[#666]" strokeWidth={3.6} />
    <div className="ml-[29px] w-[400px] h-[57px] pt-[3px] rounded-b-[6px] bg-gradient-to-r from-white via-white to-[#e8e8e8] border-b-4 border-[#2a4fa8] flex items-center pl-[24px]">
      <svg viewBox="0 0 36 40" className="w-[34px] h-[38px]" fill="#fff" stroke="#333" strokeWidth="1.8">
        <path d="M1 14l3-3h9v28H4l-3-3Z" /><path d="M17 5l4-4h12l2 4v34H17Z" /><path d="M1 14h12M17 5h18" fill="none" />
      </svg>
      <span className="ml-[8px] pt-[3px] text-[26.5px] text-[#333]">Part Studio 1</span>
    </div>
    <div className="ml-[4px] w-[400px] h-[55px] pt-[2px] rounded-b-[8px] bg-[#e0e0e0] flex items-center pl-[23px]">
      <svg viewBox="0 0 36 40" className="w-[36px] h-[40px]" fill="none" stroke="#333" strokeWidth="1.8">
        <path d="M1 4l3-3h25l5 6v32H6l-5-3Z" fill="#fff" />
        <path d="M4 4h22v26H4Z" fill="#8f8f8f" />
      </svg>
      <span className="ml-[8px] text-[26.5px] text-[#666]">Assembly 1</span>
    </div>
  </div>
);

export default function App() {
  return (
    <div className="w-[2580px] h-[1986px] bg-[linear-gradient(90deg,#b8912f_50%,#222_50%)] overflow-hidden">
      <div className="w-full h-full rounded-[20px] overflow-hidden flex flex-col font-['Noto_Sans','Noto_Sans_CJK_SC',sans-serif]">
        <div className="shrink-0 bg-[#f1d9e5] font-['Inter','Noto_Sans_CJK_SC',sans-serif]">
          <TabStrip />
          <AddressRow />
          <BookmarkRow />
        </div>
        <Header />
        <div className="flex flex-1 min-h-0">
          <Rail />
          <div className="flex-1 flex flex-col min-w-0">
            <Toolbar />
            <div className="flex flex-1 min-h-0">
              <FeaturePanel />
              <Viewport />
            </div>
            <BottomBar />
          </div>
        </div>
      </div>
    </div>
  );
}
